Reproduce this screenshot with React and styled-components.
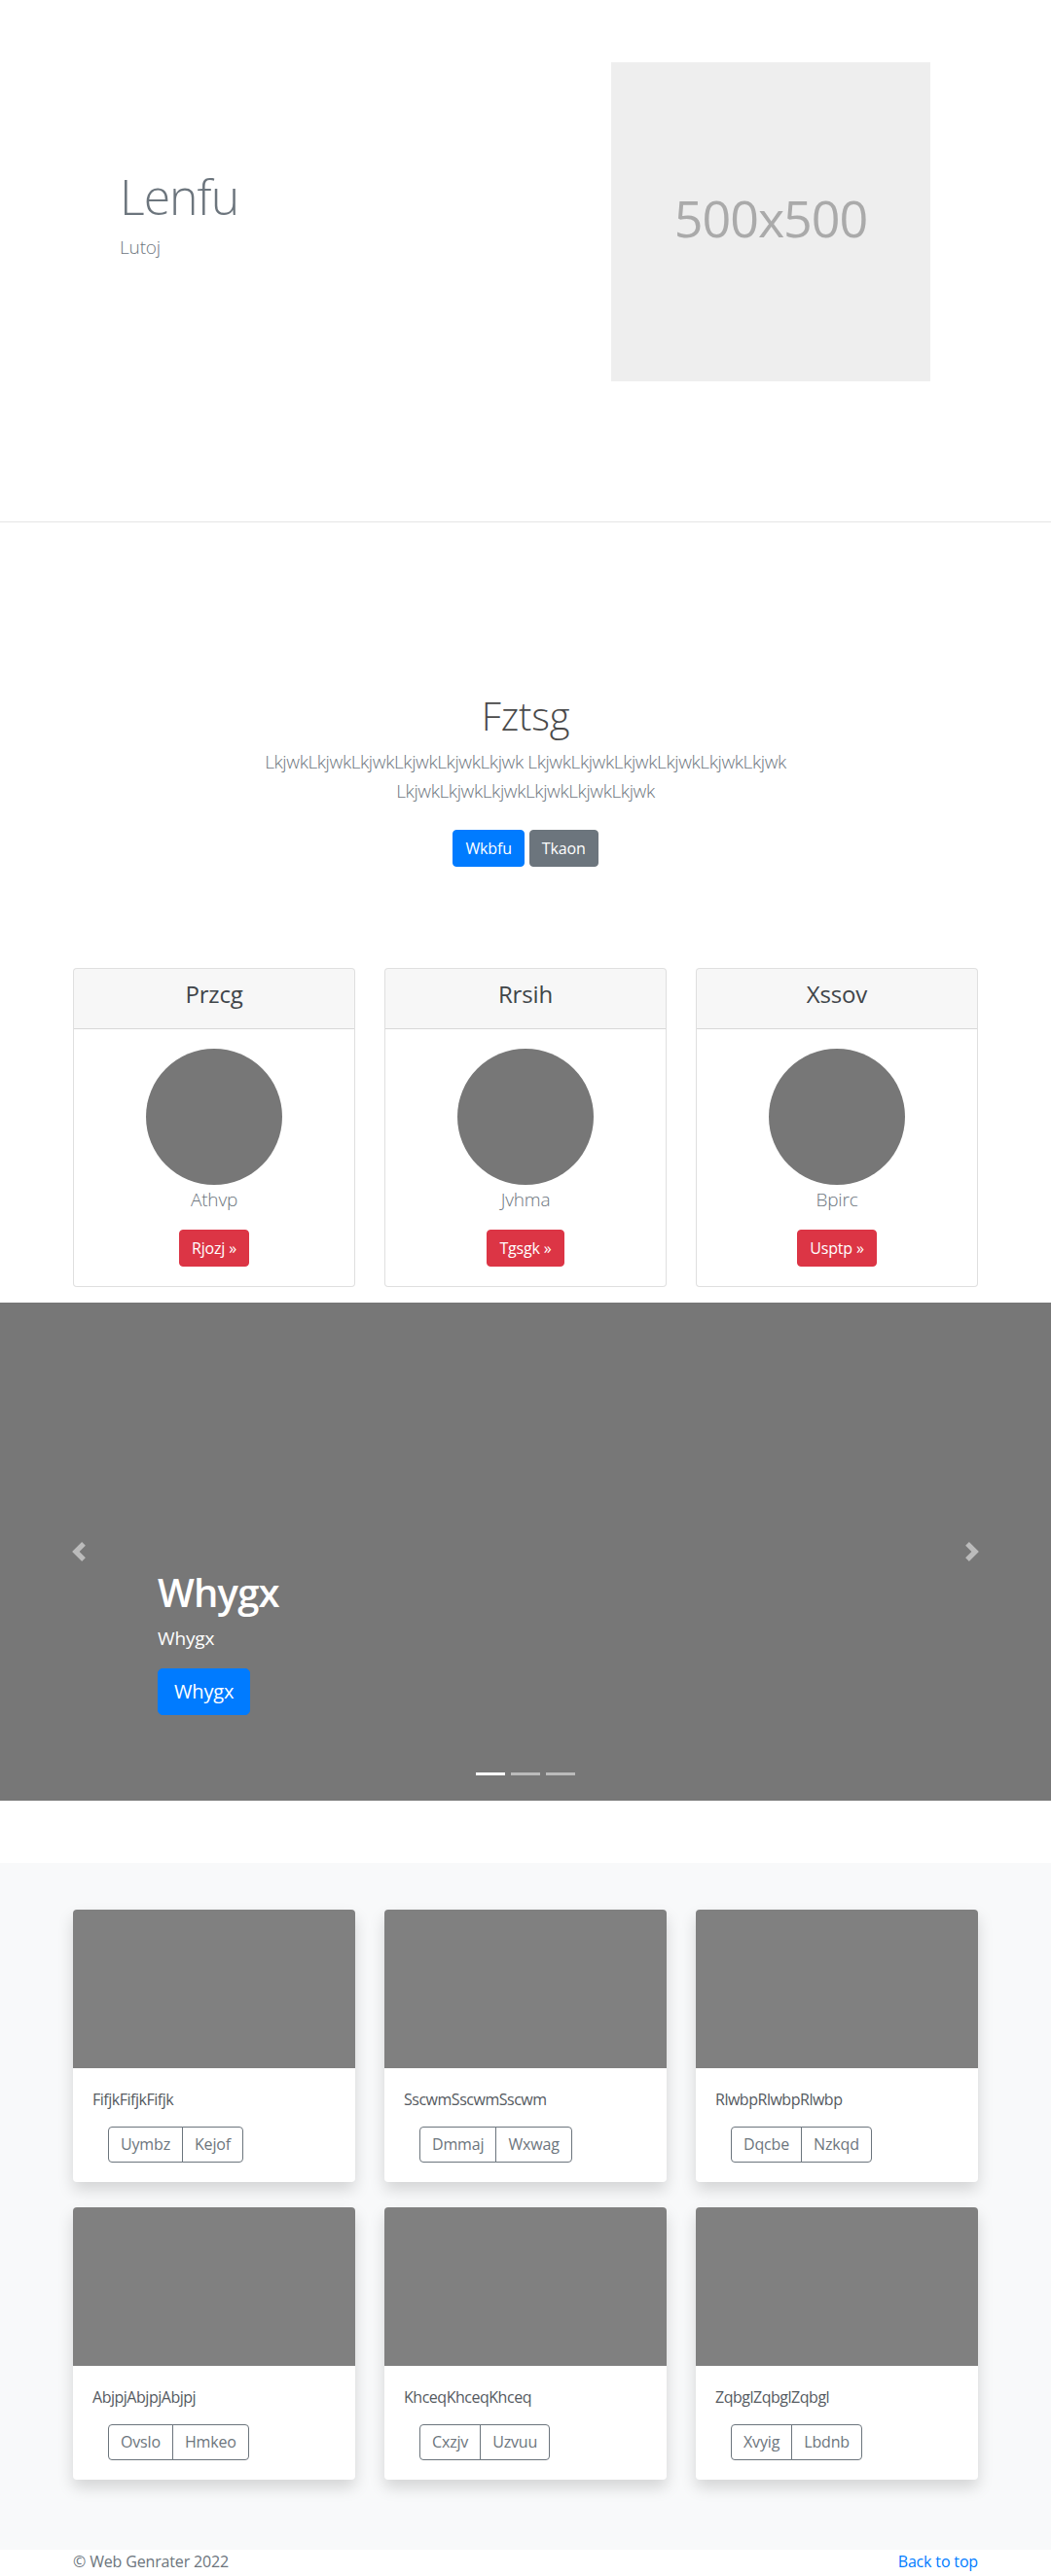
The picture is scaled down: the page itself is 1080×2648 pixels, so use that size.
import React from "react";
import styled, { createGlobalStyle, css } from "styled-components";

const GlobalStyle = createGlobalStyle`
  *, *::before, *::after { box-sizing: border-box; }
  html, body { margin: 0; padding: 0; }
  body {
    font-family: "Open Sans", "Noto Sans", "Liberation Sans", sans-serif;
    font-size: 16px;
    line-height: 1.5;
    color: #212529;
    background: #fff;
    letter-spacing: -0.01em;
  }
`;

const Container = styled.div`
  width: 930px;
  margin: 0 auto;
`;

/* ---------- Buttons ---------- */
const variants = {
  primary: css`background: #007bff; border-color: #007bff; color: #fff;`,
  secondary: css`background: #6c757d; border-color: #6c757d; color: #fff;`,
  danger: css`background: #dc3545; border-color: #dc3545; color: #fff;`,
  outline: css`background: transparent; border-color: #6c757d; color: #6c757d;`,
};

const Button = styled.a`
  display: inline-block;
  font-family: inherit;
  font-weight: 400;
  text-decoration: none;
  border: 1px solid transparent;
  border-radius: 4px;
  cursor: pointer;
  white-space: nowrap;
  ${({ $size }) =>
    $size === "lg"
      ? css`
          padding: 8px 16px;
          font-size: 20px;
          line-height: 30px;
          border-radius: 5px;
        `
      : css`
          padding: 6px 12px;
          font-size: 16px;
          line-height: 24px;
        `}
  ${({ $variant }) => variants[$variant || "primary"]}
`;

/* ---------- Hero ---------- */
const Hero = styled.section`
  padding: 64px 0 144px;
  border-bottom: 1px solid #e5e5e5;
`;

const HeroRow = styled.div`
  display: flex;
  align-items: center;
`;

const HeroText = styled.div`
  flex: 0 0 50%;
  padding-left: 48px;
`;

const HeroTitle = styled.h1`
  margin: 0 0 8px;
  font-size: 50px;
  font-weight: 300;
  line-height: 1.2;
  color: #6c757d;
  letter-spacing: -0.02em;
`;

const HeroSub = styled.p`
  margin: 0 0 16px;
  font-size: 19px;
  font-weight: 300;
  line-height: 1.5;
  color: #6c757d;
`;

const HeroMedia = styled.div`
  flex: 1;
  display: flex;
  justify-content: flex-end;
  padding-right: 49px;
`;

const Placeholder = styled.div`
  width: 328px;
  height: 328px;
  padding-bottom: 8px;
  background: #eeeeee;
  color: #aaaaaa;
  display: flex;
  align-items: center;
  justify-content: center;
  font-size: 52px;
  font-weight: 400;
  letter-spacing: -0.02em;
`;

/* ---------- Pricing header ---------- */
const PricingHeader = styled.section`
  padding: 175px 0 104px;
  text-align: center;
`;

const PricingTitle = styled.h1`
  margin: 0 0 8px;
  font-size: 40px;
  font-weight: 300;
  line-height: 48px;
  color: #4a4a4a;
`;

const Lead = styled.p`
  margin: 0 auto 25px;
  max-width: 610px;
  font-size: 19px;
  font-weight: 300;
  line-height: 30px;
  color: #6c757d;
  letter-spacing: -0.02em;
`;

const ButtonRow = styled.div`
  display: flex;
  justify-content: center;
  gap: 5px;
`;

/* ---------- Pricing cards ---------- */
const Deck = styled.div`
  display: grid;
  grid-template-columns: repeat(3, 1fr);
  gap: 30px;
  margin-bottom: 16px;
`;

const PriceCard = styled.div`
  border: 1px solid rgba(0, 0, 0, 0.125);
  border-radius: 4px;
  text-align: center;
  background: #fff;
  overflow: hidden;
`;

const CardHeader = styled.div`
  padding: 12px 20px;
  background: rgba(0, 0, 0, 0.03);
  border-bottom: 1px solid rgba(0, 0, 0, 0.125);
`;

const CardHeaderTitle = styled.h4`
  margin: 0 0 8px;
  font-size: 24px;
  font-weight: 500;
  line-height: 1.2;
  color: #3f4549;
`;

const PriceBody = styled.div`
  padding: 20px;
  display: flex;
  flex-direction: column;
  align-items: center;
`;

const Avatar = styled.div`
  width: 140px;
  height: 140px;
  border-radius: 50%;
  background: #777777;
`;

const AvatarName = styled.p`
  margin: 0 0 16px;
  font-size: 19px;
  font-weight: 300;
  line-height: 30px;
  color: #6c757d;
`;

/* ---------- Carousel ---------- */
const Carousel = styled.section`
  position: relative;
  height: 512px;
  background: #777777;
  margin-bottom: 64px;
  overflow: hidden;
`;

const Caption = styled.div`
  position: absolute;
  left: 15%;
  right: 15%;
  bottom: 52px;
  padding: 20px 0;
  color: #fff;
  text-align: left;
  z-index: 2;
`;

const CaptionTitle = styled.h1`
  margin: 0 0 8px;
  font-size: 40px;
  font-weight: 600;
  line-height: 48px;
  letter-spacing: -0.02em;
`;

const CaptionText = styled.p`
  margin: 0 0 16px;
  font-size: 19px;
  font-weight: 400;
  line-height: 30px;
`;

const CaptionAction = styled.p`
  margin: 0 0 16px;
`;

const Control = styled.a`
  position: absolute;
  top: 0;
  bottom: 0;
  width: 15%;
  display: flex;
  align-items: center;
  justify-content: center;
  opacity: 0.5;
  ${({ $side }) => ($side === "prev" ? css`left: 0;` : css`right: 0;`)}
  svg { width: 20px; height: 20px; display: block; }
`;

const Indicators = styled.ol`
  position: absolute;
  left: 15%;
  right: 15%;
  bottom: 0;
  margin: 0 0 16px;
  padding: 0;
  list-style: none;
  display: flex;
  justify-content: center;
  z-index: 3;
`;

const Indicator = styled.li`
  width: 30px;
  height: 3px;
  margin: 10px 3px;
  background: #fff;
  opacity: ${({ $active }) => ($active ? 1 : 0.5)};
`;

/* ---------- Album ---------- */
const Album = styled.section`
  background: #f8f9fa;
  padding: 48px 0 72px;
`;

const AlbumGrid = styled.div`
  display: grid;
  grid-template-columns: repeat(3, 1fr);
  column-gap: 30px;
  row-gap: 26px;
`;

const AlbumCard = styled.div`
  background: #fff;
  border-radius: 4px;
  overflow: hidden;
  box-shadow: 0 8px 16px rgba(0, 0, 0, 0.15);
`;

const Thumb = styled.div`
  height: 163px;
  background: #808080;
`;

const AlbumBody = styled.div`
  padding: 20px;
`;

const AlbumText = styled.p`
  margin: 0 0 16px;
  font-size: 16px;
  line-height: 24px;
  color: #555a5f;
  letter-spacing: -0.03em;
`;

const BtnGroup = styled.div`
  display: inline-flex;
  margin-left: 16px;
  ${Button} {
    border-radius: 0;
    padding: 6px 12px;
    line-height: 23px;
  }
  ${Button}:first-child { border-radius: 4px 0 0 4px; }
  ${Button}:last-child { border-radius: 0 4px 4px 0; margin-left: -1px; }
`;

/* ---------- Footer ---------- */
const Footer = styled.footer`
  color: #6c757d;
  font-size: 16px;
  line-height: 24px;
`;

const FooterRow = styled.div`
  display: flex;
  justify-content: space-between;
`;

const FooterLink = styled.a`
  color: #007bff;
  text-decoration: none;
`;

/* ---------- Icons ---------- */
const PrevIcon = () => (
  <svg viewBox="0 0 8 8" fill="#fff" aria-hidden="true">
    <path d="M5.25 0l-4 4 4 4 1.5-1.5L4.25 4l2.5-2.5L5.25 0z" />
  </svg>
);
const NextIcon = () => (
  <svg viewBox="0 0 8 8" fill="#fff" aria-hidden="true">
    <path d="M2.75 0l-1.5 1.5L3.75 4l-2.5 2.5L2.75 8l4-4-4-4z" />
  </svg>
);

const pricing = [
  { title: "Przcg", name: "Athvp", cta: "Rjozj »" },
  { title: "Rrsih", name: "Jvhma", cta: "Tgsgk »" },
  { title: "Xssov", name: "Bpirc", cta: "Usptp »" },
];

const album = [
  { text: "FifjkFifjkFifjk", a: "Uymbz", b: "Kejof" },
  { text: "SscwmSscwmSscwm", a: "Dmmaj", b: "Wxwag" },
  { text: "RlwbpRlwbpRlwbp", a: "Dqcbe", b: "Nzkqd" },
  { text: "AbjpjAbjpjAbjpj", a: "Ovslo", b: "Hmkeo" },
  { text: "KhceqKhceqKhceq", a: "Cxzjv", b: "Uzvuu" },
  { text: "ZqbglZqbglZqbgl", a: "Xvyig", b: "Lbdnb" },
];

export default function App() {
  return (
    <>
      <GlobalStyle />
      <Hero>
        <Container>
          <HeroRow>
            <HeroText>
              <HeroTitle>Lenfu</HeroTitle>
              <HeroSub>Lutoj</HeroSub>
            </HeroText>
            <HeroMedia>
              <Placeholder>500x500</Placeholder>
            </HeroMedia>
          </HeroRow>
        </Container>
      </Hero>

      <PricingHeader>
        <Container>
          <PricingTitle>Fztsg</PricingTitle>
          <Lead>
            LkjwkLkjwkLkjwkLkjwkLkjwkLkjwk LkjwkLkjwkLkjwkLkjwkLkjwkLkjwk
            LkjwkLkjwkLkjwkLkjwkLkjwkLkjwk
          </Lead>
          <ButtonRow>
            <Button $variant="primary">Wkbfu</Button>
            <Button $variant="secondary">Tkaon</Button>
          </ButtonRow>
        </Container>
      </PricingHeader>

      <Container>
        <Deck>
          {pricing.map((p) => (
            <PriceCard key={p.title}>
              <CardHeader>
                <CardHeaderTitle>{p.title}</CardHeaderTitle>
              </CardHeader>
              <PriceBody>
                <Avatar />
                <AvatarName>{p.name}</AvatarName>
                <Button $variant="danger">{p.cta}</Button>
              </PriceBody>
            </PriceCard>
          ))}
        </Deck>
      </Container>

      <Carousel>
        <Caption>
          <CaptionTitle>Whygx</CaptionTitle>
          <CaptionText>Whygx</CaptionText>
          <CaptionAction>
            <Button $variant="primary" $size="lg">Whygx</Button>
          </CaptionAction>
        </Caption>
        <Control $side="prev"><PrevIcon /></Control>
        <Control $side="next"><NextIcon /></Control>
        <Indicators>
          <Indicator $active />
          <Indicator />
          <Indicator />
        </Indicators>
      </Carousel>

      <Album>
        <Container>
          <AlbumGrid>
            {album.map((c) => (
              <AlbumCard key={c.text}>
                <Thumb />
                <AlbumBody>
                  <AlbumText>{c.text}</AlbumText>
                  <BtnGroup>
                    <Button $variant="outline">{c.a}</Button>
                    <Button $variant="outline">{c.b}</Button>
                  </BtnGroup>
                </AlbumBody>
              </AlbumCard>
            ))}
          </AlbumGrid>
        </Container>
      </Album>

      <Footer>
        <Container>
          <FooterRow>
            <span>© Web Genrater 2022</span>
            <FooterLink href="#">Back to top</FooterLink>
          </FooterRow>
        </Container>
      </Footer>
    </>
  );
}
